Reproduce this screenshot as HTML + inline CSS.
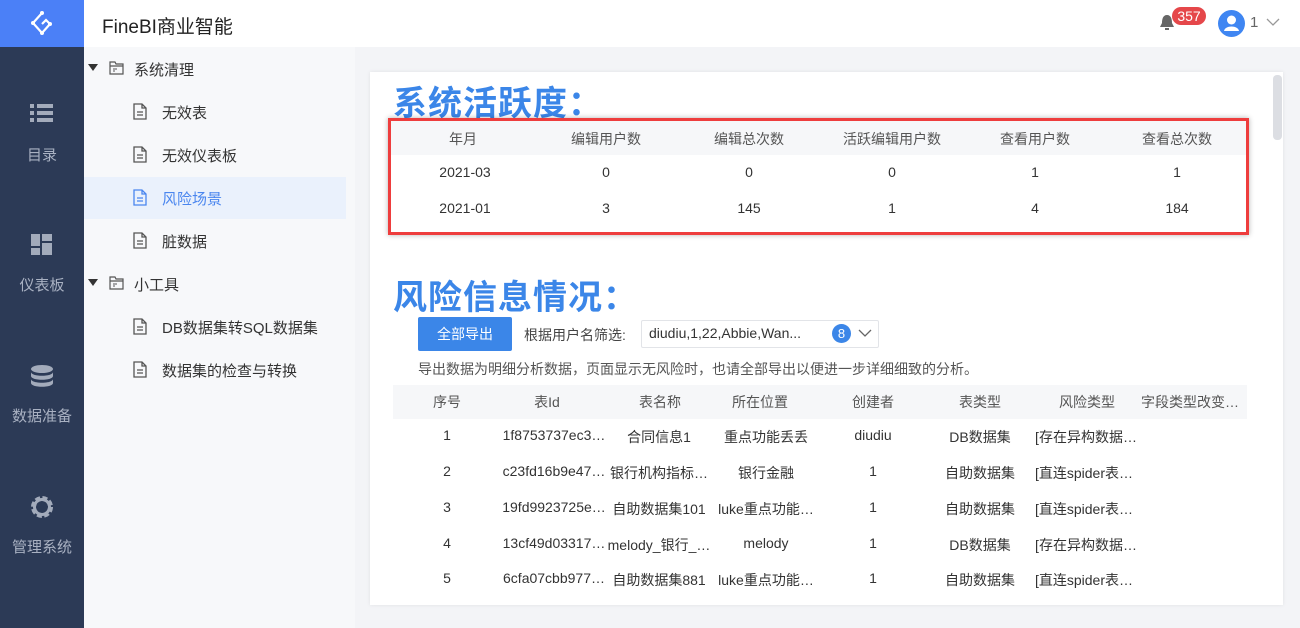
<!DOCTYPE html>
<html><head><meta charset="utf-8"><style>
*{margin:0;padding:0;box-sizing:border-box}
body{width:1300px;height:628px;overflow:hidden;background:#f3f4f7;font-family:"Liberation Sans","Noto Sans CJK SC",sans-serif;position:relative;color:#333}
.abs{position:absolute}
.side{left:0;top:0;width:84px;height:628px;background:#2c3a56}
.logo{left:0;top:0;width:84px;height:47px;background:#4b80f7}
.top{left:84px;top:0;width:1216px;height:47px;background:#fff}
.tree{left:84px;top:47px;width:271px;height:581px;background:#f7f8fa}
.nav{width:84px;text-align:center;color:#a9b1c2;font-size:15px}
.tr{font-size:15px;color:#333;white-space:nowrap}
.card{left:370px;top:72px;width:913px;height:533px;background:#fff;box-shadow:0 0 4px rgba(0,0,0,.08)}
.h{font-size:34px;font-weight:bold;color:#3b86e8;letter-spacing:1px}
.c{position:absolute;text-align:center;font-size:14px;color:#333;transform:translateX(-50%);white-space:nowrap}
.hd{color:#555}
</style></head><body>
<div class="abs side"></div>
<div class="abs logo"><svg width="84" height="47"><g fill="none" stroke="#fff" stroke-width="2.2"><path d="M42 13 L33 23 L42 33 L50 24 L46 20 L42 24"/></g><g fill="#fff"><circle cx="42" cy="13" r="2"/><circle cx="33" cy="23" r="2"/><circle cx="42" cy="33" r="2"/><circle cx="50" cy="24" r="2"/></g></svg></div>
<div class="abs top"></div>
<div class="abs" style="left:102px;top:12px;font-size:19px;color:#222">FineBI商业智能</div>
<svg class="abs" style="left:1159px;top:14px" width="16" height="18"><path d="M8 1 C4 1 3 5 3 9 L1 13 L15 13 L13 9 C13 5 12 1 8 1Z" fill="#666"/><rect x="6" y="14" width="4" height="2" fill="#666"/></svg>
<div class="abs" style="left:1172px;top:7px;width:34px;height:18px;border-radius:9px;background:#e5474a;color:#fff;font-size:14px;text-align:center;line-height:18px">357</div>
<svg class="abs" style="left:1218px;top:10px" width="27" height="27"><circle cx="13.5" cy="13.5" r="13.5" fill="#3f86f2"/><circle cx="13.5" cy="10" r="4.5" fill="#fff"/><path d="M6 21 C7 15 20 15 21 21Z" fill="#fff"/></svg>
<div class="abs" style="left:1250px;top:14px;font-size:15px;color:#666">1</div>
<svg class="abs" style="left:1266px;top:18px" width="14" height="9"><path d="M1 1 L7 7 L13 1" fill="none" stroke="#999" stroke-width="1.3"/></svg>

<svg class="abs" style="left:29px;top:102px" width="26" height="22" fill="#a3abbb"><rect x="1" y="2" width="4" height="4"/><rect x="8" y="2" width="16" height="4"/><rect x="1" y="9" width="4" height="4"/><rect x="8" y="9" width="16" height="4"/><rect x="1" y="16" width="4" height="4"/><rect x="8" y="16" width="16" height="4"/></svg>
<div class="abs nav" style="top:144px">目录</div>
<svg class="abs" style="left:30px;top:233px" width="24" height="24" fill="#a3abbb"><rect x="1" y="1" width="9" height="12"/><rect x="12" y="1" width="10" height="7"/><rect x="1" y="15" width="9" height="7"/><rect x="12" y="10" width="10" height="12"/></svg>
<div class="abs nav" style="top:274px">仪表板</div>
<svg class="abs" style="left:30px;top:364px" width="24" height="24" fill="#a3abbb"><ellipse cx="12" cy="5" rx="11" ry="4"/><path d="M1 8 C1 13 23 13 23 8 L23 12 C23 17 1 17 1 12Z"/><path d="M1 15 C1 20 23 20 23 15 L23 19 C23 24 1 24 1 19Z"/></svg>
<div class="abs nav" style="top:405px">数据准备</div>
<svg class="abs" style="left:29px;top:494px" width="26" height="26"><circle cx="13" cy="13" r="8.5" fill="none" stroke="#a3abbb" stroke-width="5" stroke-dasharray="4.5 2.2"/><circle cx="13" cy="13" r="7.5" fill="none" stroke="#a3abbb" stroke-width="3"/></svg>
<div class="abs nav" style="top:536px">管理系统</div>

<div class="abs tree"></div>
<div class="abs" style="left:84px;top:177px;width:262px;height:42px;background:#eaf1fc"></div>
<svg width="0" height="0" style="position:absolute"><defs>
<g id="fd"><path d="M1 2 L6 2 L7 4 L14 4 L14 14 L1 14Z M1 6 L14 6" fill="none" stroke="#555" stroke-width="1.2"/><path d="M4 9 L8 9 M4 11 L6 11" stroke="#555" stroke-width="1"/></g>
<g id="fl"><path d="M1 1 L9 1 L13 5 L13 16 L1 16Z M9 1 L9 5 L13 5" fill="none" stroke-width="1.3"/><path d="M4 9 L10 9 M4 12 L10 12" stroke-width="1.2"/></g>
</defs></svg>
<svg class="abs" style="left:88px;top:64px" width="10" height="8"><path d="M0 0 L10 0 L5 7Z" fill="#333"/></svg>
<svg class="abs" style="left:109px;top:60px" width="16" height="16"><use href="#fd"/></svg>
<div class="abs tr" style="left:134px;top:59px">系统清理</div>
<svg class="abs" style="left:133px;top:103px" width="15" height="18" stroke="#555"><use href="#fl"/></svg>
<div class="abs tr" style="left:162px;top:102px">无效表</div>
<svg class="abs" style="left:133px;top:146px" width="15" height="18" stroke="#555"><use href="#fl"/></svg>
<div class="abs tr" style="left:162px;top:145px">无效仪表板</div>
<svg class="abs" style="left:133px;top:189px" width="15" height="18" stroke="#4a86ef"><use href="#fl"/></svg>
<div class="abs tr" style="left:162px;top:188px;color:#4a86ef">风险场景</div>
<svg class="abs" style="left:133px;top:232px" width="15" height="18" stroke="#555"><use href="#fl"/></svg>
<div class="abs tr" style="left:162px;top:231px">脏数据</div>
<svg class="abs" style="left:88px;top:279px" width="10" height="8"><path d="M0 0 L10 0 L5 7Z" fill="#333"/></svg>
<svg class="abs" style="left:109px;top:275px" width="16" height="16"><use href="#fd"/></svg>
<div class="abs tr" style="left:134px;top:274px">小工具</div>
<svg class="abs" style="left:133px;top:318px" width="15" height="18" stroke="#555"><use href="#fl"/></svg>
<div class="abs tr" style="left:162px;top:317px">DB数据集转SQL数据集</div>
<svg class="abs" style="left:133px;top:361px" width="15" height="18" stroke="#555"><use href="#fl"/></svg>
<div class="abs tr" style="left:162px;top:360px">数据集的检查与转换</div>

<div class="abs card"></div>
<div class="abs" style="left:1273px;top:75px;width:9px;height:65px;border-radius:4px;background:#dcdee3"></div>
<div class="abs h" style="left:393px;top:76px">系统活跃度：</div>
<div class="abs" style="left:388px;top:118px;width:861px;height:117px;border:3px solid #ee3d3d;box-shadow:0 0 5px rgba(0,0,0,.3)"></div>
<div class="abs" style="left:391px;top:121px;width:855px;height:34px;background:#f6f7f9"></div>
<div class="abs" style="left:0;top:129px;width:1300px">
<div class="c hd" style="left:463px">年月</div><div class="c hd" style="left:606px">编辑用户数</div><div class="c hd" style="left:749px">编辑总次数</div><div class="c hd" style="left:892px">活跃编辑用户数</div><div class="c hd" style="left:1035px">查看用户数</div><div class="c hd" style="left:1177px">查看总次数</div></div>
<div class="abs" style="left:0;top:164px;width:1300px">
<div class="c" style="left:465px">2021-03</div><div class="c" style="left:606px">0</div><div class="c" style="left:749px">0</div><div class="c" style="left:892px">0</div><div class="c" style="left:1035px">1</div><div class="c" style="left:1177px">1</div></div>
<div class="abs" style="left:0;top:200px;width:1300px">
<div class="c" style="left:465px">2021-01</div><div class="c" style="left:606px">3</div><div class="c" style="left:749px">145</div><div class="c" style="left:892px">1</div><div class="c" style="left:1035px">4</div><div class="c" style="left:1177px">184</div></div>

<div class="abs h" style="left:393px;top:270px">风险信息情况：</div>
<div class="abs" style="left:418px;top:317px;width:94px;height:34px;background:#3b86e8;border-radius:2px;color:#fff;font-size:14px;text-align:center;line-height:34px">全部导出</div>
<div class="abs" style="left:524px;top:325px;font-size:14px;color:#444">根据用户名筛选:</div>
<div class="abs" style="left:641px;top:320px;width:238px;height:28px;border:1px solid #e2e4e8;border-radius:2px"></div>
<div class="abs" style="left:649px;top:325px;font-size:14px;color:#333">diudiu,1,22,Abbie,Wan...</div>
<div class="abs" style="left:832px;top:324px;width:19px;height:19px;border-radius:50%;background:#3b86e8;color:#fff;font-size:13px;text-align:center;line-height:19px">8</div>
<svg class="abs" style="left:858px;top:329px" width="14" height="9"><path d="M1 1 L7 7 L13 1" fill="none" stroke="#666" stroke-width="1.3"/></svg>
<div class="abs" style="left:418px;top:359px;font-size:14px;color:#555">导出数据为明细分析数据，页面显示无风险时，也请全部导出以便进一步详细细致的分析。</div>
<div class="abs" style="left:393px;top:385px;width:854px;height:34px;background:#f6f7f9"></div>
<div class="abs" style="left:0;top:392px;width:1300px">
<div class="c hd" style="left:447px">序号</div><div class="c hd" style="left:547px">表Id</div><div class="c hd" style="left:660px">表名称</div><div class="c hd" style="left:760px">所在位置</div><div class="c hd" style="left:873px">创建者</div><div class="c hd" style="left:980px">表类型</div><div class="c hd" style="left:1087px">风险类型</div><div class="c hd" style="left:1190px">字段类型改变…</div></div>
<div class="abs" style="left:0;top:427px;width:1300px">
<div class="c" style="left:447px">1</div><div class="c" style="left:554px">1f8753737ec3…</div><div class="c" style="left:659px">合同信息1</div><div class="c" style="left:766px">重点功能丢丢</div><div class="c" style="left:873px">diudiu</div><div class="c" style="left:980px">DB数据集</div><div class="c" style="left:1086px">[存在异构数据…</div></div>
<div class="abs" style="left:0;top:463px;width:1300px">
<div class="c" style="left:447px">2</div><div class="c" style="left:554px">c23fd16b9e47…</div><div class="c" style="left:659px">银行机构指标…</div><div class="c" style="left:766px">银行金融</div><div class="c" style="left:873px">1</div><div class="c" style="left:980px">自助数据集</div><div class="c" style="left:1084px">[直连spider表…</div></div>
<div class="abs" style="left:0;top:499px;width:1300px">
<div class="c" style="left:447px">3</div><div class="c" style="left:554px">19fd9923725e…</div><div class="c" style="left:659px">自助数据集101</div><div class="c" style="left:766px">luke重点功能…</div><div class="c" style="left:873px">1</div><div class="c" style="left:980px">自助数据集</div><div class="c" style="left:1084px">[直连spider表…</div></div>
<div class="abs" style="left:0;top:535px;width:1300px">
<div class="c" style="left:447px">4</div><div class="c" style="left:554px">13cf49d03317…</div><div class="c" style="left:659px">melody_银行_…</div><div class="c" style="left:766px">melody</div><div class="c" style="left:873px">1</div><div class="c" style="left:980px">DB数据集</div><div class="c" style="left:1086px">[存在异构数据…</div></div>
<div class="abs" style="left:0;top:570px;width:1300px">
<div class="c" style="left:447px">5</div><div class="c" style="left:554px">6cfa07cbb977…</div><div class="c" style="left:659px">自助数据集881</div><div class="c" style="left:766px">luke重点功能…</div><div class="c" style="left:873px">1</div><div class="c" style="left:980px">自助数据集</div><div class="c" style="left:1084px">[直连spider表…</div></div>
</body></html>
